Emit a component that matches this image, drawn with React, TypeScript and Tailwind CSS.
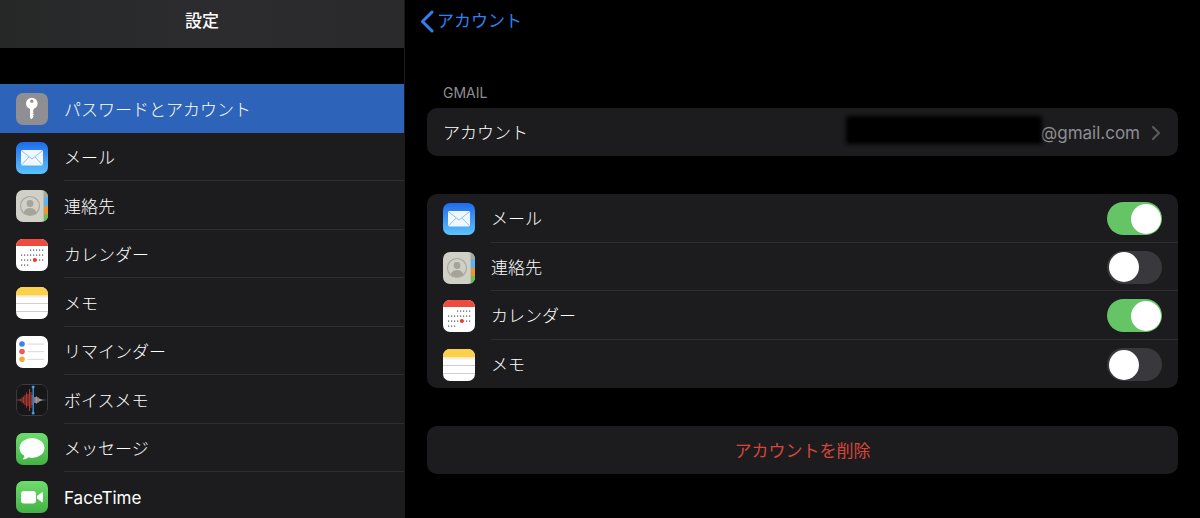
import React from "react";

const FONT = '"Inter", "Noto Sans CJK JP", sans-serif';

function IconShell({ children }: { children: React.ReactNode }) {
  return (
    <svg width="32" height="32" viewBox="0 0 32 32" className="mt-[2px] shrink-0">
      <defs>
        <clipPath id="squircle">
          <rect width="32" height="32" rx="7" />
        </clipPath>
        <linearGradient id="mailBg" x1="0" y1="0" x2="0" y2="1">
          <stop offset="0" stopColor="#1f6bec" />
          <stop offset="1" stopColor="#5cc4fb" />
        </linearGradient>
        <linearGradient id="greenBg" x1="0" y1="0" x2="0" y2="1">
          <stop offset="0" stopColor="#6fdc6d" />
          <stop offset="1" stopColor="#43b244" />
        </linearGradient>
      </defs>
      <g clipPath="url(#squircle)">{children}</g>
    </svg>
  );
}

const KeyIcon = () => (
  <IconShell>
    <rect width="32" height="32" fill="#8e8e93" />
    <path d="M14 14h3.600v3l-1 1 1.200 1.200-1.200 1 1.400 1.300-1.400 1.300 1 1-2.200 2.400L14 24.600z" fill="#fff" />
    <circle cx="15.800" cy="10.500" r="5.800" fill="#fff" />
    <circle cx="15.800" cy="8.200" r="1.600" fill="#8e8e93" />
  </IconShell>
);

const MailIcon = () => (
  <IconShell>
    <rect width="32" height="32" fill="url(#mailBg)" />
    <rect x="5" y="8" width="22" height="15.500" rx="1.500" fill="#f0f7fe" />
    <path d="M5.500 8.700 16 17l10.500-8.300M5.500 22.800l7.600-7.800M26.500 22.800 18.900 15" fill="none" stroke="#8fc0f5" strokeWidth="1" />
  </IconShell>
);

const ContactsIcon = () => (
  <IconShell>
    <rect width="32" height="32" fill="#d1d0c7" />
    <rect x="27.500" y="0" width="4.500" height="32" fill="#a9a89e" />
    <rect x="28" y="7" width="4" height="9" fill="#5cb3ee" />
    <rect x="28" y="16" width="4" height="8" fill="#ef9433" />
    <rect x="28" y="24" width="4" height="8" fill="#6cc04f" />
    <circle cx="14" cy="16" r="9.500" fill="none" stroke="#aaa99f" strokeWidth="1.200" />
    <circle cx="14" cy="13.500" r="3.400" fill="#a5a49a" />
    <path d="M7.500 22.500c1.200-3 3.600-4.400 6.500-4.400s5.300 1.400 6.500 4.400c-1.700 1.600-4 2.600-6.500 2.600s-4.800-1-6.500-2.600z" fill="#a5a49a" />
  </IconShell>
);

const calendarDots: [number, number][] = [];
[11, 16, 21, 26].forEach((y, r) => {
  for (let i = 0; i < 8; i++) {
    if (r === 0 && i < 3) continue;
    if (r === 3 && i > 2) continue;
    calendarDots.push([5 + i * 3, y - 0.5]);
  }
});

const CalendarIcon = () => (
  <IconShell>
    <rect width="32" height="32" fill="#fff" />
    <rect width="32" height="7" fill="#ee4b3f" />
    {calendarDots.map(([x, y]) => (
      <rect key={`${x}-${y}`} x={x} y={y} width="1.200" height="1.200" fill="#55555a" />
    ))}
    <circle cx="18.800" cy="21" r="2" fill="#ee3b30" />
  </IconShell>
);

const NotesIcon = () => (
  <IconShell>
    <rect width="32" height="32" fill="#fff" />
    <rect width="32" height="8.500" fill="#fbd04a" />
    <rect y="9.500" width="32" height="0.800" fill="#e0e0e0" />
    <rect y="16" width="32" height="1" fill="#cfcfcf" />
    <rect y="24" width="32" height="1" fill="#cfcfcf" />
  </IconShell>
);

const RemindersIcon = () => (
  <IconShell>
    <rect width="32" height="32" fill="#fff" />
    <circle cx="6" cy="8" r="2.800" fill="#3d82f2" />
    <circle cx="6" cy="15.500" r="2.800" fill="#ee5b52" />
    <circle cx="6" cy="23.300" r="2.800" fill="#f5a93c" />
    <rect x="11.500" y="7.500" width="16.500" height="1.200" fill="#dedee0" />
    <rect x="11.500" y="15" width="16.500" height="1.200" fill="#dedee0" />
    <rect x="11.500" y="22.800" width="16.500" height="1.200" fill="#dedee0" />
  </IconShell>
);

const VoiceMemosIcon = () => (
  <IconShell>
    <rect width="32" height="32" fill="#17171a" />
    <rect x="0.500" y="0.500" width="31" height="31" rx="6.500" fill="none" stroke="#3a3a3c" />
    <path
      d="M1 16h3M4.500 15v2M6 13.500v5M7.500 12.500v7M9 11v10M10.500 8.500v15M12 10v12M13.500 5v22M15 8v16M16.200 11v10"
      stroke="#a93a31"
      strokeWidth="1.100"
    />
    <path d="M19 13v6M20.500 12.500v7M22 13.500v5M23.500 14.500v3M25 15v2M27 15.500v1M29 15.700v.6" stroke="#9a9a9e" strokeWidth="1.400" />
    <rect x="16.500" y="2.500" width="1.300" height="27" fill="#3f9cf2" />
    <circle cx="17.150" cy="3" r="1.500" fill="#3f9cf2" />
    <circle cx="17.150" cy="29" r="1.500" fill="#3f9cf2" />
  </IconShell>
);

const MessagesIcon = () => (
  <IconShell>
    <rect width="32" height="32" fill="url(#greenBg)" />
    <ellipse cx="16" cy="15" rx="12.500" ry="10" fill="#fff" />
    <path d="M8.500 21.500c.2 2-.8 3.600-2 4.700 2.600.1 4.800-.8 6.300-2.300z" fill="#fff" />
  </IconShell>
);

const FaceTimeIcon = () => (
  <IconShell>
    <rect width="32" height="32" fill="url(#greenBg)" />
    <rect x="5" y="10" width="15" height="12.500" rx="3" fill="#fff" />
    <path d="M21 15 26 11.300c.5-.3.900-.1.900.5v9c0 .6-.4.800-.9.500L21 17.500z" fill="#fff" />
  </IconShell>
);

const sidebarItems = [
  { label: "パスワードとアカウント", icon: <KeyIcon />, selected: true },
  { label: "メール", icon: <MailIcon /> },
  { label: "連絡先", icon: <ContactsIcon /> },
  { label: "カレンダー", icon: <CalendarIcon /> },
  { label: "メモ", icon: <NotesIcon /> },
  { label: "リマインダー", icon: <RemindersIcon /> },
  { label: "ボイスメモ", icon: <VoiceMemosIcon /> },
  { label: "メッセージ", icon: <MessagesIcon /> },
  { label: "FaceTime", icon: <FaceTimeIcon /> },
];

const services = [
  { label: "メール", icon: <MailIcon />, on: true },
  { label: "連絡先", icon: <ContactsIcon />, on: false },
  { label: "カレンダー", icon: <CalendarIcon />, on: true },
  { label: "メモ", icon: <NotesIcon />, on: false },
];

function Toggle({ on }: { on: boolean }) {
  return (
    <div
      className={`flex h-[33px] w-[55px] items-center rounded-full px-[1.500px] ${
        on ? "justify-end bg-[#65c466]" : "justify-start bg-[#39393d]"
      }`}
    >
      <div className="h-[30px] w-[30px] rounded-full bg-white" />
    </div>
  );
}

export default function App() {
  return (
    <div className="flex h-[518px] w-[1200px] overflow-hidden bg-black font-light" style={{ fontFamily: FONT }}>
      {/* master column */}
      <aside className="flex h-full w-[405px] shrink-0 flex-col border-r border-[#1a1a1c]">
        <header className="flex h-[48px] shrink-0 items-center justify-center bg-gradient-to-r from-[#262828] via-[#2c2c2e] to-[#2a2a2c] pb-[4px] text-[17px] font-medium text-white">
          設定
        </header>
        <div className="h-[36px] shrink-0 bg-black" />
        <nav className="flex-1 overflow-hidden bg-[#1c1c1e]">
          {sidebarItems.map((item) => (
            <div
              key={item.label}
              className={`flex h-[48.500px] items-center pl-4 ${item.selected ? "bg-[#2d63b8]" : ""}`}
            >
              {item.icon}
              <div
                className={`ml-4 flex h-full flex-1 items-center pt-[5px] text-[17px] text-white ${
                  item.selected ? "" : "border-b border-[#2e2e30]"
                } ${item.label === "FaceTime" ? "font-normal" : ""}`}
              >
                {item.label}
              </div>
            </div>
          ))}
        </nav>
      </aside>

      {/* detail column */}
      <main className="flex-1">
        <div className="flex h-[42px] items-center pt-[2px] pl-[14px] text-[17px] font-normal text-[#3080f5]">
          <svg width="16" height="24" viewBox="0 0 16 24" fill="none" className="mr-[2px]">
            <path d="M13 2 3.500 11.500 13 21" stroke="#3080f5" strokeWidth="3" strokeLinecap="round" strokeLinejoin="round" />
          </svg>
          アカウント
        </div>

        <div className="mx-[22px] mt-[42px]">
          <div className="mb-[8px] h-[16px] pl-[16px] pt-[1px] text-[14px] leading-4 font-normal text-[#8d8d93]">GMAIL</div>

          <div className="flex h-[48px] items-center rounded-[10px] bg-[#1c1c1e] pr-[17px] pl-[16px] text-[17px] text-white">
            <span className="mt-[4px]">アカウント</span>
            <span className="relative mt-[4px] ml-auto font-normal text-[#8e8e93]">
              @gmail.com
              <span className="absolute top-[-5px] right-[98px] h-[28px] w-[196px] rounded-[3px] bg-black blur-[2px]" />
            </span>
            <svg width="10" height="16" viewBox="0 0 10 16" fill="none" className="mt-[2px] ml-[11px]">
              <path d="M2 2 8 8 2 14" stroke="#5a5a5e" strokeWidth="2.200" strokeLinecap="round" strokeLinejoin="round" />
            </svg>
          </div>

          <div className="mt-[38px] overflow-hidden rounded-[10px] bg-[#1c1c1e]">
            {services.map((s, i) => (
              <div key={s.label} className="flex h-[48.500px] items-center pl-[16px]">
                {s.icon}
                <div
                  className={`ml-[16px] flex h-full flex-1 items-center justify-between pt-[2px] pr-[16px] text-[17px] text-white ${
                    i < services.length - 1 ? "border-b border-[#2e2e30]" : ""
                  }`}
                >
                  <span className="mt-[2px]">{s.label}</span>
                  <Toggle on={s.on} />
                </div>
              </div>
            ))}
          </div>

          <div className="mt-[38px] flex h-[48px] items-center justify-center rounded-[10px] bg-[#1c1c1e] pt-[4px] text-[17px] font-normal text-[#d8463b]">
            アカウントを削除
          </div>
        </div>
      </main>
    </div>
  );
}
